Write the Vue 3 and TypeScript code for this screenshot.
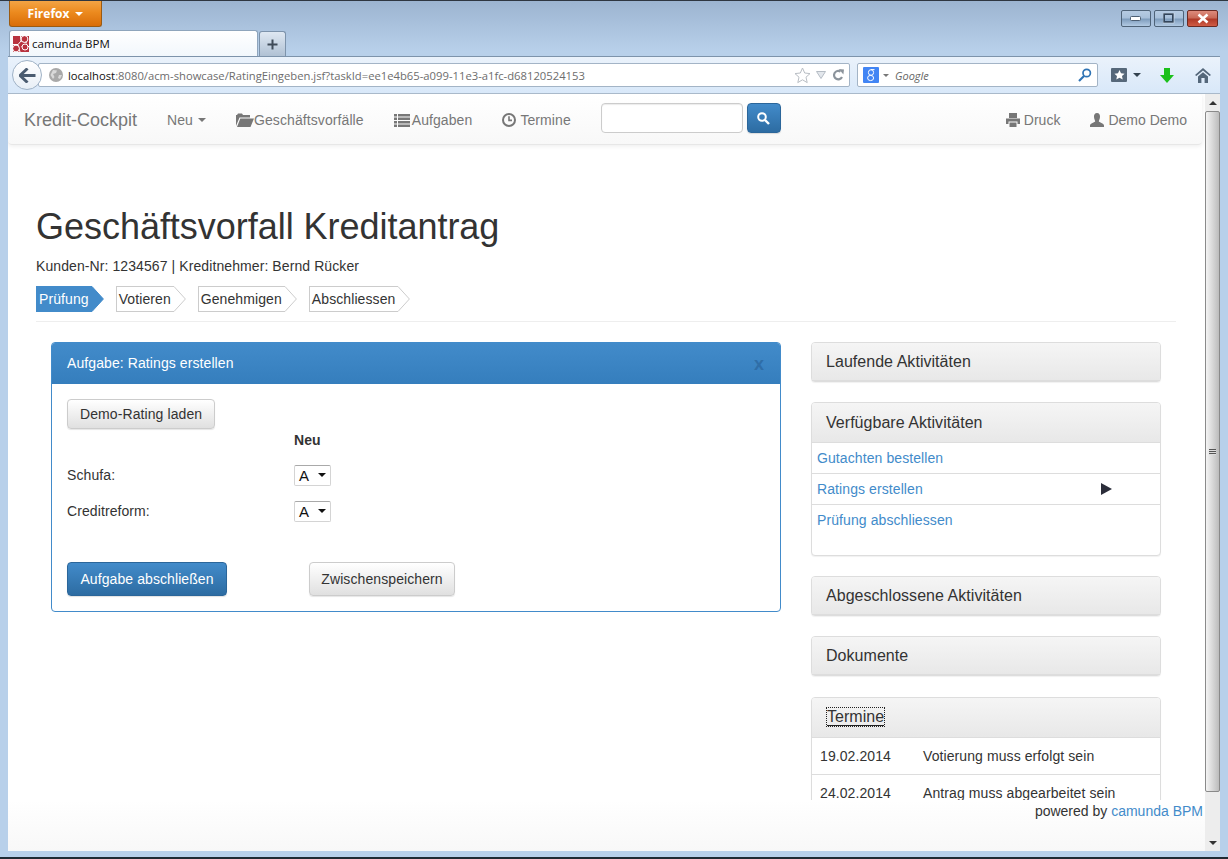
<script setup lang="ts">
const steps = [
  { label: 'Prüfung', active: true },
  { label: 'Votieren', active: false },
  { label: 'Genehmigen', active: false },
  { label: 'Abschliessen', active: false },
]

const ratings = ['Schufa:', 'Creditreform:']

const activities = [
  { label: 'Gutachten bestellen', current: false },
  { label: 'Ratings erstellen', current: true },
  { label: 'Prüfung abschliessen', current: false },
]

const termine = [
  { date: '19.02.2014', text: 'Votierung muss erfolgt sein' },
  { date: '24.02.2014', text: 'Antrag muss abgearbeitet sein' },
]
</script>

<template>
  <div class="window">
    <div class="titlebar">
      <div class="ff-button">Firefox <i class="ff-caret"></i></div>
      <div class="win-controls">
        <div class="win-btn">
          <svg width="12" height="6" viewBox="0 0 12 6"><rect x="0.5" y="0.5" width="10" height="4" rx="1" fill="#fff" stroke="#4d5f73" /></svg>
        </div>
        <div class="win-btn">
          <svg width="12" height="11" viewBox="0 0 12 11"><rect x="1" y="1" width="9" height="8" fill="none" stroke="#33465c" stroke-width="2" /><rect x="0" y="0" width="11" height="10" fill="none" stroke="#dfe8f2" stroke-width="0.6" /></svg>
        </div>
        <div class="win-btn win-close">
          <svg width="14" height="11" viewBox="0 0 14 11"><path d="M2.5 1.5 L11.5 9.5 M11.5 1.5 L2.5 9.5" stroke="#fff" stroke-width="2.6" /></svg>
        </div>
      </div>
    </div>

    <div class="tabrow">
      <div class="tab">
        <svg class="favicon" width="16" height="16" viewBox="0 0 16 16">
          <rect width="16" height="16" fill="#b8333f" />
          <path d="M0 8.5 H5 L8 5 L7.5 0 M8 5 L14 7 M5 8.5 L7 16 M8.5 10.5 H16" stroke="#fff" stroke-width="1" fill="none" />
          <circle cx="11.5" cy="3" r="3.4" fill="#b8333f" stroke="#fff" stroke-width="1" />
          <circle cx="3" cy="12.5" r="3.4" fill="#b8333f" stroke="#fff" stroke-width="1" />
          <circle cx="12" cy="11" r="3" fill="#b8333f" stroke="#fff" stroke-width="1" />
        </svg>
        <span>camunda BPM</span>
      </div>
      <div class="newtab">
        <svg width="11" height="11" viewBox="0 0 11 11"><path d="M5.5 0.5 V10.5 M0.5 5.5 H10.5" stroke="#3f4b58" stroke-width="2" /></svg>
      </div>
    </div>

    <div class="toolbar">
      <div class="back-btn">
        <svg width="17" height="15" viewBox="0 0 17 15"><path d="M8.5 0.5 L1 7.5 L8.5 14.5 M2 7.5 H16.5" fill="none" stroke="#4b5c70" stroke-width="3" /></svg>
      </div>
      <div class="urlbar">
        <svg class="globe" width="14" height="14" viewBox="0 0 14 14">
          <circle cx="7" cy="7" r="7" fill="#a9a9a9" />
          <path d="M4 2 L8 2.5 L7 5 L4 6 L5.5 9 L4 11 L1.5 7 Z M10 7 L13 7 L11 11 L9 10 Z" fill="#d9d9d9" />
        </svg>
        <span class="url"><b>localhost</b>:8080/acm-showcase/RatingEingeben.jsf?taskId=ee1e4b65-a099-11e3-a1fc-d68120524153</span>
        <svg class="url-star" width="17" height="17" viewBox="0 0 17 17"><path d="M8.5 1 L10.7 6 L16 6.6 L12 10.2 L13.2 15.6 L8.5 12.8 L3.8 15.6 L5 10.2 L1 6.6 L6.3 6 Z" fill="#fff" stroke="#b9bec4" stroke-width="1" /></svg>
        <svg class="url-drop" width="10" height="8" viewBox="0 0 10 8"><path d="M0.5 0.5 H9.5 L5 7.5 Z" fill="#e3e7ec" stroke="#b5bcc4" /></svg>
        <svg class="url-reload" width="12" height="12" viewBox="0 0 12 12"><path d="M10 8 A4.2 4.2 0 1 1 8.5 2.6" fill="none" stroke="#8c949c" stroke-width="2.2" /><path d="M6.8 0 L12 0.4 L11.4 5.6 Z" fill="#8c949c" /></svg>
      </div>
      <div class="searchbar">
        <svg class="g-icon" width="16" height="16" viewBox="0 0 16 16">
          <rect width="16" height="16" rx="1" fill="#4285f4" />
          <ellipse cx="8" cy="5.5" rx="2.6" ry="2.8" fill="none" stroke="#fff" stroke-width="1" />
          <ellipse cx="7.6" cy="11" rx="3" ry="2.6" fill="none" stroke="#fff" stroke-width="1" />
          <path d="M8 2.6 H11.5" stroke="#fff" stroke-width="1" />
        </svg>
        <i class="g-caret"></i>
        <span class="google">Google</span>
        <svg class="mag" width="14" height="14" viewBox="0 0 14 14"><circle cx="8.7" cy="5" r="3.7" fill="none" stroke="#2f74b5" stroke-width="1.7" /><path d="M6 8 L1 13" stroke="#2f74b5" stroke-width="2.2" /></svg>
      </div>
      <div class="tool-icons">
        <svg class="bm-icon" width="16" height="14" viewBox="0 0 16 14">
          <rect width="16" height="14" rx="1" fill="#56687a" />
          <path d="M8.5 2 L10 5.3 L13.6 5.7 L11 8.1 L11.7 11.6 L8.5 9.8 L5.3 11.6 L6 8.1 L3.4 5.7 L7 5.3 Z" fill="#fff" />
        </svg>
        <i class="bm-caret"></i>
        <svg class="dl-icon" width="14" height="15" viewBox="0 0 14 15"><path d="M4 0 H10 V7 H14 L7 15 L0 7 H4 Z" fill="#1bc01b" /></svg>
        <svg class="home-icon" width="16" height="15" viewBox="0 0 16 15"><path d="M8 0 L16 7 L14.6 8 L8 2.6 L1.4 8 L0 7 Z" fill="#54677a" /><path d="M3 8.4 L8 4.2 L13 8.4 V15 H9.6 V10 H6.4 V15 H3 Z" fill="#54677a" /></svg>
      </div>
    </div>

    <div class="viewport">
      <div class="page">
        <nav class="navbar">
          <span class="brand">Kredit-Cockpit</span>
          <a class="nav-link">Neu <i class="caret"></i></a>
          <a class="nav-link">
            <svg class="ico" width="18" height="14" viewBox="0 0 18 14"><path d="M0 13 V2 H1 L2 0.5 H6 L7 2 H14 V4.5 H3.5 Z M1 14 L4.3 5.5 H18 L14.5 14 Z" fill="#777" /></svg>Geschäftsvorfälle
          </a>
          <a class="nav-link">
            <svg class="ico ico-list" width="16" height="14" viewBox="0 0 16 14"><path d="M0 1 H3 V3.5 H0 Z M4 1 H16 V3.5 H4 Z M0 4.6 H3 V7 H0 Z M4 4.6 H16 V7 H4 Z M0 8.1 H3 V10.5 H0 Z M4 8.1 H16 V10.5 H4 Z M0 11.6 H3 V14 H0 Z M4 11.6 H16 V14 H4 Z" fill="#777" /></svg>Aufgaben
          </a>
          <a class="nav-link">
            <svg class="ico ico-gap" width="14" height="14" viewBox="0 0 14 14"><circle cx="7" cy="7" r="6" fill="none" stroke="#777" stroke-width="2" /><path d="M7 3.2 V7.4 H10" fill="none" stroke="#777" stroke-width="1.6" /></svg>Termine
          </a>
          <form class="nav-search" @submit.prevent>
            <input class="nav-input" type="text" />
            <button class="btn-primary search-btn" type="button">
              <svg width="13" height="13" viewBox="0 0 13 13"><circle cx="5" cy="5" r="3.8" fill="none" stroke="#fff" stroke-width="2" /><path d="M8 8 L12 12" stroke="#fff" stroke-width="2.4" /></svg>
            </button>
          </form>
          <div class="nav-right">
            <a class="nav-link">
              <svg class="ico ico-gap" width="14" height="14" viewBox="0 0 14 14"><path d="M3 0 H11 V5 H3 Z M0 5.5 H14 V11 H11.5 V8.5 H2.5 V11 H0 Z M3.5 9.5 H10.5 V14 H3.5 Z" fill="#777" /></svg>Druck
            </a>
            <a class="nav-link">
              <svg class="ico ico-gap" width="14" height="14" viewBox="0 0 14 14"><path d="M7 0 C9.2 0 10.2 1.8 10 4 C9.8 6 9 7.4 8.8 8.2 C9 9.4 14 10 14 12.5 V14 H0 V12.5 C0 10 5 9.4 5.2 8.2 C5 7.4 4.2 6 4 4 C3.8 1.8 4.8 0 7 0 Z" fill="#777" /></svg>Demo Demo
            </a>
          </div>
        </nav>

        <main class="content">
          <h1>Geschäftsvorfall Kreditantrag</h1>
          <p class="customer">Kunden-Nr: 1234567 | Kreditnehmer: Bernd Rücker</p>

          <div class="steps">
            <div v-for="step in steps" :key="step.label" class="step" :class="{ active: step.active }">
              <span class="step-label">{{ step.label }}</span>
              <svg class="step-tip" width="12" height="26" viewBox="0 0 12 26">
                <path d="M0 0.5 L11.4 13 L0 25.5" :fill="step.active ? '#428bca' : '#fff'" :stroke="step.active ? '#428bca' : '#ccc'" />
              </svg>
            </div>
          </div>
          <hr />

          <div class="columns">
            <section class="task-panel">
              <header class="task-head">
                <span>Aufgabe: Ratings erstellen</span>
                <span class="task-close">x</span>
              </header>
              <div class="task-body">
                <button class="btn" type="button">Demo-Rating laden</button>
                <div class="rating-table">
                  <span></span>
                  <strong>Neu</strong>
                  <template v-for="rating in ratings" :key="rating">
                    <span>{{ rating }}</span>
                    <div class="fake-select">A <i class="select-caret"></i></div>
                  </template>
                </div>
                <div class="task-actions">
                  <button class="btn-primary finish" type="button">Aufgabe abschließen</button>
                  <button class="btn save" type="button">Zwischenspeichern</button>
                </div>
              </div>
            </section>

            <aside class="side">
              <section class="panel">
                <div class="panel-head">Laufende Aktivitäten</div>
              </section>
              <section class="panel">
                <div class="panel-head tall">Verfügbare Aktivitäten</div>
                <div v-for="item in activities" :key="item.label" class="activity">
                  <a>{{ item.label }}</a>
                  <svg v-if="item.current" class="play" width="11" height="12" viewBox="0 0 11 12"><path d="M0 0 L11 6 L0 12 Z" fill="#2b2d3a" /></svg>
                </div>
                <div class="activity-space"></div>
              </section>
              <section class="panel">
                <div class="panel-head">Abgeschlossene Aktivitäten</div>
              </section>
              <section class="panel">
                <div class="panel-head">Dokumente</div>
              </section>
              <section class="panel termine">
                <div class="panel-head tall"><span class="focused">Termine</span></div>
                <div v-for="row in termine" :key="row.date" class="termin">
                  <span class="termin-date">{{ row.date }}</span>
                  <span>{{ row.text }}</span>
                </div>
              </section>
            </aside>
          </div>
        </main>

        <footer class="footer">powered by <a>camunda BPM</a></footer>
      </div>

      <div class="scrollbar">
        <div class="sb-button"><i class="sb-up"></i></div>
        <div class="sb-thumb"><i class="sb-grip"></i></div>
        <div class="sb-track"></div>
        <div class="sb-button"><i class="sb-down"></i></div>
      </div>
    </div>
  </div>
</template>

<style>
html,
body {
  margin: 0;
  overflow: hidden;
}
</style>

<style scoped>
.window {
  display: flex;
  flex-direction: column;
  box-sizing: border-box;
  width: 1228px;
  height: 859px;
  padding: 0 8px 6px;
  overflow: hidden;
  border-top: 1px solid #2e3640;
  border-bottom: 2px solid #1f2a33;
  background: linear-gradient(#9cb4d0, #b8d0ea 50px);
  font-family: "Liberation Sans", Arial, sans-serif;
  font-size: 14px;
  color: #333;
}

.titlebar {
  display: flex;
  justify-content: space-between;
  height: 30px;
  flex: none;
}

.ff-button {
  display: flex;
  align-items: center;
  justify-content: center;
  gap: 6px;
  box-sizing: border-box;
  width: 93px;
  height: 26px;
  margin-left: 1px;
  border: 1px solid #9a5a12;
  border-top: 0;
  border-radius: 0 0 3px 3px;
  background: linear-gradient(#f3a445, #ec8a1e 45%, #d96d08);
  color: #fff;
  font-family: "Open Sans", sans-serif;
  font-size: 12px;
  font-weight: 700;
}

.ff-caret {
  border: 4px solid transparent;
  border-top-color: #fff;
  border-bottom: 0;
}

.win-controls {
  display: flex;
  gap: 3px;
  margin-top: 9px;
  margin-right: 2px;
}

.win-btn {
  display: flex;
  align-items: center;
  justify-content: center;
  box-sizing: border-box;
  width: 30px;
  height: 17px;
  border: 1px solid #4f6378;
  border-radius: 2px;
  background: linear-gradient(#b6cbe2, #a8c0da 45%, #7f9dbd 55%, #b2cae3);
}

.win-close {
  width: 31px;
  border-color: #6b2a22;
  background: linear-gradient(#dd8b7c, #c96a58 45%, #b03a28 55%, #d05c45);
}

.tabrow {
  display: flex;
  align-items: flex-end;
  gap: 1px;
  height: 25px;
  flex: none;
  padding-left: 1px;
}

.tab {
  display: flex;
  align-items: center;
  gap: 3px;
  box-sizing: border-box;
  width: 249px;
  height: 26px;
  padding-left: 3px;
  border: 1px solid #8fa5bc;
  border-bottom: 0;
  border-radius: 3px 3px 0 0;
  background: linear-gradient(#fff, #f2f7fc);
  color: #111;
  font-family: "Open Sans", sans-serif;
  font-size: 11.5px;
  position: relative;
  z-index: 1;
}

.newtab {
  display: flex;
  align-items: center;
  justify-content: center;
  box-sizing: border-box;
  width: 27px;
  height: 25px;
  border: 1px solid #7d93ab;
  border-bottom: 0;
  border-radius: 3px 3px 0 0;
  background: linear-gradient(#dfe8f2, #b0c1d4);
}

.toolbar {
  display: flex;
  align-items: center;
  height: 38px;
  flex: none;
  border-top: 1px solid #7d93ab;
  border-bottom: 1px solid #a9b9ca;
  box-sizing: border-box;
  background: linear-gradient(#eaf2fb, #d8e8f9);
  position: relative;
}

.back-btn {
  display: flex;
  align-items: center;
  justify-content: center;
  position: absolute;
  left: 4px;
  top: 3px;
  width: 30px;
  height: 30px;
  box-sizing: border-box;
  border: 1px solid #9fb2c6;
  border-radius: 50%;
  background: linear-gradient(#fff, #e8eff6);
  z-index: 2;
}

.urlbar {
  display: flex;
  align-items: center;
  box-sizing: border-box;
  width: 812px;
  height: 24px;
  margin-left: 30px;
  padding: 0 5px 0 10px;
  border: 1px solid #a3b4c6;
  border-radius: 2px;
  background: #fff;
}

.globe {
  flex: none;
}

.url {
  flex: 1;
  margin-left: 5px;
  font-family: "Open Sans", sans-serif;
  font-size: 11.25px;
  color: #6d6d6d;
  white-space: nowrap;
}

.url b {
  color: #111;
  font-weight: 400;
}

.url-star {
  margin-right: 5px;
}

.url-drop {
  margin-right: 6px;
}

.searchbar {
  display: flex;
  align-items: center;
  box-sizing: border-box;
  width: 241px;
  height: 24px;
  margin-left: 7px;
  padding: 0 5px;
  border: 1px solid #a3b4c6;
  border-radius: 2px;
  background: #fff;
}

.g-caret {
  margin-left: 4px;
  border: 3px solid transparent;
  border-top-color: #777;
  border-bottom: 0;
}

.google {
  flex: 1;
  margin-left: 6px;
  font-family: "Open Sans", sans-serif;
  font-size: 11px;
  font-style: italic;
  color: #666;
}

.tool-icons {
  display: flex;
  align-items: center;
  margin-left: 13px;
}

.bm-caret {
  margin-left: 6px;
  border: 4px solid transparent;
  border-top-color: #33424f;
  border-bottom: 0;
}

.dl-icon {
  margin-left: 19px;
}

.home-icon {
  margin-left: 21px;
}

.viewport {
  display: flex;
  flex: 1;
  min-height: 0;
  background: #fff;
}

.page {
  flex: 1;
  min-width: 0;
  overflow: hidden;
  position: relative;
  letter-spacing: 0.09px;
}

.navbar {
  display: flex;
  align-items: center;
  box-sizing: border-box;
  width: 1194px;
  height: 51px;
  padding-top: 2px;
  border-bottom: 1px solid #e7e7e7;
  border-radius: 4px;
  background: linear-gradient(#fff, #f8f8f8);
  box-shadow: 0 1px 5px rgba(0, 0, 0, 0.08);
}

.brand {
  margin-left: 16px;
  margin-right: 15px;
  font-size: 18px;
  letter-spacing: 0;
  color: #777;
}

.nav-link {
  display: flex;
  align-items: center;
  padding: 0 15px;
  color: #777;
  white-space: nowrap;
}

.ico {
  flex: none;
}

.ico-list {
  margin-right: 2px;
}

.ico-gap {
  margin-right: 4px;
}

.caret {
  margin-left: 5px;
  border: 4px solid transparent;
  border-top-color: #777;
  border-bottom: 0;
}

.nav-search {
  display: flex;
  align-items: center;
  gap: 4px;
  margin-top: -4px;
  margin-left: 15px;
}

.nav-input {
  box-sizing: border-box;
  width: 142px;
  height: 30px;
  border: 1px solid #ccc;
  border-radius: 4px;
  background: #fff;
  box-shadow: inset 0 1px 1px rgba(0, 0, 0, 0.08);
}

.btn-primary {
  border: 1px solid #2b669a;
  border-radius: 4px;
  background: linear-gradient(#428bca, #2d6ca2);
  color: #fff;
  font-family: inherit;
  font-size: 14px;
  letter-spacing: inherit;
  box-shadow: 0 1px 1px rgba(0, 0, 0, 0.12);
}

.search-btn {
  display: flex;
  align-items: center;
  justify-content: center;
  width: 34px;
  height: 30px;
  padding: 0;
}

.nav-right {
  display: flex;
  margin-left: auto;
  letter-spacing: 0;
}

.content {
  padding: 62px 29px 0 28px;
}

h1 {
  margin: 0;
  font-size: 36px;
  font-weight: 400;
  line-height: 40px;
  letter-spacing: -0.03px;
  color: #333;
}

.customer {
  margin: 9px 0 0;
  line-height: 20px;
}

.steps {
  display: flex;
  gap: 12px;
  margin-top: 10px;
}

.step {
  display: flex;
}

.step-label {
  box-sizing: border-box;
  height: 26px;
  padding: 0 3px 0 2px;
  border: 1px solid #ccc;
  border-right: 0;
  line-height: 24px;
}

.step.active .step-label {
  border-color: #428bca;
  background: #428bca;
  color: #fff;
}

.step-tip {
  flex: none;
}

hr {
  height: 1px;
  margin: 9px 0 20px;
  border: 0;
  background: #eee;
}

.columns {
  display: flex;
  align-items: flex-start;
  gap: 30px;
  margin-left: 15px;
}

.task-panel {
  box-sizing: border-box;
  width: 730px;
  height: 270px;
  flex: none;
  border: 1px solid #428bca;
  border-radius: 4px;
  overflow: hidden;
}

.task-head {
  display: flex;
  align-items: center;
  justify-content: space-between;
  box-sizing: border-box;
  height: 41px;
  padding: 0 16px 2px 15px;
  background: linear-gradient(#428bca, #357ebd);
  color: #fff;
}

.task-close {
  margin-top: 4px;
  font-size: 18px;
  font-weight: 700;
  color: #2f6ea8;
}

.task-body {
  padding: 15px 15px;
}

.btn {
  height: 30px;
  padding: 0 12px;
  border: 1px solid #ccc;
  border-radius: 4px;
  background: linear-gradient(#fff, #e0e0e0);
  color: #333;
  font-family: inherit;
  font-size: 14px;
  letter-spacing: inherit;
  box-shadow: 0 1px 1px rgba(0, 0, 0, 0.1);
}

.rating-table {
  display: grid;
  grid-template-columns: 227px auto;
  grid-template-rows: 28px 36px 36px;
  justify-items: start;
  align-items: center;
  align-content: start;
  height: 133px;
}

.rating-table strong {
  align-self: start;
  margin-top: 2px;
  line-height: 18px;
}

.fake-select {
  display: flex;
  align-items: center;
  justify-content: space-between;
  box-sizing: border-box;
  width: 37px;
  height: 21px;
  padding: 0 4px;
  border: 1px solid #d4d4d4;
  border-top-color: #a9a9a9;
  border-radius: 2px;
  background: #fff;
  color: #111;
  font-size: 15px;
}

.select-caret {
  border: 4px solid transparent;
  border-top-color: #111;
  border-bottom: 0;
}

.task-actions {
  display: flex;
  gap: 82px;
}

.task-actions button {
  height: 34px;
  padding: 0;
}

.finish {
  width: 160px;
}

.save {
  width: 146px;
}

.side {
  display: flex;
  flex-direction: column;
  gap: 20px;
  width: 350px;
  flex: none;
}

.panel {
  border: 1px solid #ddd;
  border-radius: 4px;
  background: #fff;
  box-shadow: 0 1px 1px rgba(0, 0, 0, 0.06);
}

.termine {
  margin-top: 1px;
}

.panel-head {
  box-sizing: border-box;
  height: 38px;
  padding: 0 14px;
  border-bottom: 1px solid #ddd;
  border-radius: 3px 3px 0 0;
  background: linear-gradient(#f5f5f5, #e8e8e8);
  color: #333;
  font-size: 16px;
  letter-spacing: 0.04px;
  line-height: 38px;
}

.panel-head.tall {
  height: 40px;
  line-height: 40px;
}

.termine .panel-head.tall {
  line-height: 38px;
}

.activity {
  display: flex;
  align-items: center;
  justify-content: space-between;
  height: 30px;
  padding: 0 48px 0 5px;
  border-bottom: 1px solid #ddd;
}

.activity:nth-last-child(2) {
  border-bottom: 0;
}

.activity a,
.footer a {
  color: #428bca;
}

.activity-space {
  height: 20px;
}

.focused {
  display: inline-block;
  margin-left: 1px;
  line-height: 17px;
  outline: 1px dotted #222;
  border-bottom: 1px solid #222;
}

.termin {
  display: flex;
  height: 36px;
  align-items: center;
  padding-left: 8px;
  border-bottom: 1px solid #ddd;
}

.termin-date {
  width: 103px;
}

.footer {
  position: absolute;
  left: 0;
  right: 0;
  bottom: 0;
  box-sizing: border-box;
  height: 51px;
  padding: 1px 2px 0 0;
  background: linear-gradient(#fff, #f8f8f8);
  text-align: right;
  line-height: 20px;
  letter-spacing: 0;
}

.scrollbar {
  display: flex;
  flex-direction: column;
  width: 15px;
  flex: none;
  background: #ededed;
}

.sb-button {
  display: flex;
  align-items: center;
  justify-content: center;
  height: 17px;
  flex: none;
}

.sb-up {
  border: 4px solid transparent;
  border-bottom-color: #333;
  border-top: 0;
}

.sb-down {
  border: 4px solid transparent;
  border-top-color: #333;
  border-bottom: 0;
}

.sb-thumb {
  display: flex;
  align-items: center;
  justify-content: center;
  box-sizing: border-box;
  height: 681px;
  flex: none;
  border: 1px solid #8a8a8a;
  border-radius: 2px;
  background: linear-gradient(90deg, #f4f4f4, #d8d8d8 50%, #bcbcbc);
}

.sb-grip {
  width: 7px;
  height: 6px;
  background: repeating-linear-gradient(#555 0 1px, #ddd 1px 2px);
}

.sb-track {
  flex: 1;
}
</style>
